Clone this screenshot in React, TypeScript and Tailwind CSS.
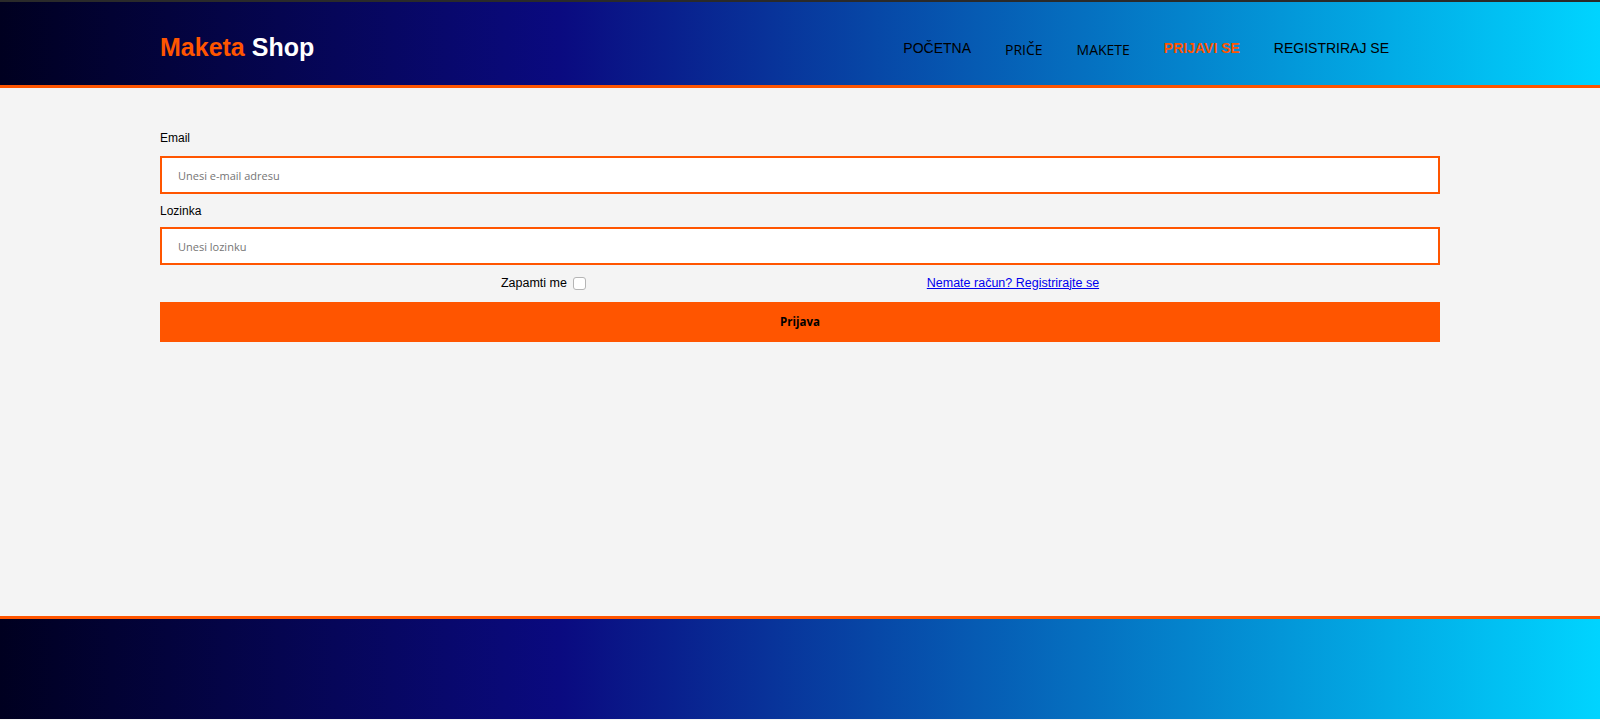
import React from 'react';

const gradient =
    'bg-[linear-gradient(to_right,#000020_0%,#0a0a80_35%,#00d4ff_100%)]';

const navItems = [
    { label: 'POČETNA', cls: "font-['Liberation_Sans',Arial,sans-serif] text-black" },
    { label: 'PRIČE', cls: "font-['Open_Sans',sans-serif] text-black mt-[3px]" },
    { label: 'MAKETE', cls: "font-['Open_Sans',sans-serif] text-black mt-[3px]" },
    { label: 'PRIJAVI SE', cls: "font-['Liberation_Sans',Arial,sans-serif] font-bold text-[#ff5500]" },
    { label: 'REGISTRIRAJ SE', cls: "font-['Liberation_Sans',Arial,sans-serif] text-black" },
];

export default function App() {
    return (
        <div className="min-h-screen flex flex-col bg-[#f4f4f4] font-['Liberation_Sans',Arial,sans-serif]">
            {/* Header */}
            <header className={`border-t-2 border-[#2a2a2a] border-b-[3px] border-b-[#ff5500] ${gradient}`}>
                <div className="mx-auto w-[1280px] h-[83px] pt-[9px] flex items-center justify-between">
                    <a href="#" className="text-[25px] font-bold leading-none -mt-[1px]">
                        <span className="text-[#ff5500]">Maketa</span>{' '}
                        <span className="text-white">Shop</span>
                    </a>
                    <nav className="flex items-center gap-[34px] pr-[51px] text-[14px]">
                        {navItems.map((item) => (
                            <a key={item.label} href="#" className={item.cls}>
                                {item.label}
                            </a>
                        ))}
                    </nav>
                </div>
            </header>

            {/* Login form */}
            <main className="h-[528px]">
                <form className="mx-auto w-[1280px] pt-[41px] flex flex-col">
                    <label className="text-[12px] leading-[18px] text-black mb-[9px]">Email</label>
                    <input
                        type="email"
                        placeholder="Unesi e-mail adresu"
                        className="h-[38px] w-full border-2 border-[#ff5500] bg-white px-4 text-[11px] font-['Open_Sans',sans-serif] placeholder:text-[#757575] outline-none"
                    />
                    <label className="text-[12px] leading-[18px] text-black mt-[8px] mb-[7px]">Lozinka</label>
                    <input
                        type="password"
                        placeholder="Unesi lozinku"
                        className="h-[38px] w-full border-2 border-[#ff5500] bg-white px-4 text-[11px] font-['Open_Sans',sans-serif] placeholder:text-[#757575] outline-none"
                    />
                    <div className="mt-[8px] h-[20px] flex items-center justify-evenly text-[12.5px]">
                        <label className="flex items-center gap-[6px] text-black">
                            Zapamti me
                            <input
                                type="checkbox"
                                className="appearance-none w-[13px] h-[13px] rounded-[3px] border border-[#b5b5b5] bg-white"
                            />
                        </label>
                        <a href="#" className="text-[#0000ee] underline">
                            Nemate račun? Registrirajte se
                        </a>
                    </div>
                    <button
                        type="submit"
                        className="mt-[9px] h-[40px] w-full bg-[#ff5500] text-[11.5px] font-bold text-black font-['Open_Sans',sans-serif]"
                    >
                        Prijava
                    </button>
                </form>
            </main>

            {/* Footer */}
            <footer className={`h-[103px] border-t-[3px] border-[#ff5500] ${gradient}`} />
        </div>
    );
}
